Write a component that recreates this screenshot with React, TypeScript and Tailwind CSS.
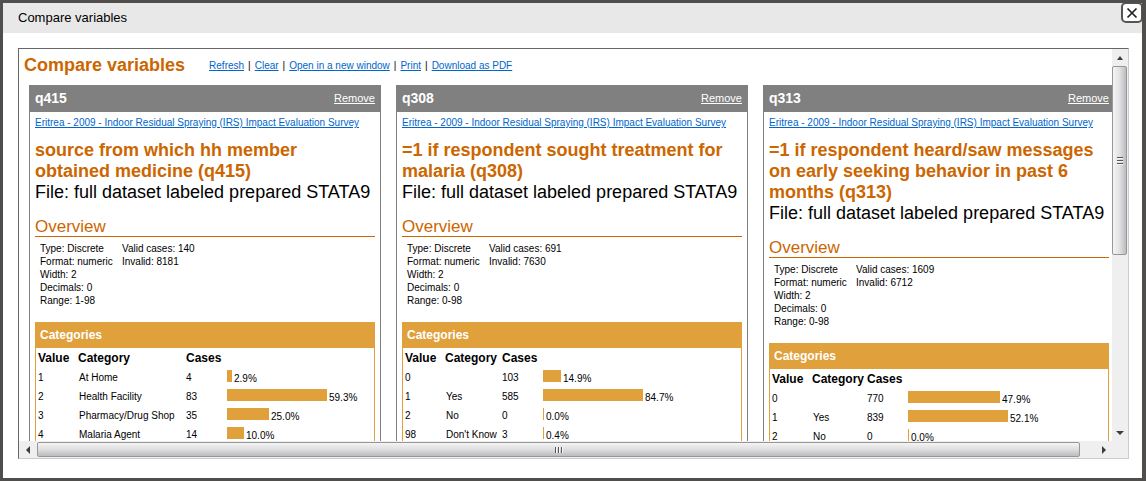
type Row = { value: string; category: string; cases: string; share: string; bar: number };

type Variable = {
  id: string;
  label: string;
  valid: string;
  invalid: string;
  range: string;
  categoryCol: string;
  rows: Row[];
};

const variables: Variable[] = [
  {
    id: "q415",
    label: "source from which hh member obtained medicine (q415)",
    valid: "140",
    invalid: "8181",
    range: "1-98",
    categoryCol: "w-[108px]",
    rows: [
      { value: "1", category: "At Home", cases: "4", share: "2.9%", bar: 5 },
      { value: "2", category: "Health Facility", cases: "83", share: "59.3%", bar: 100 },
      { value: "3", category: "Pharmacy/Drug Shop", cases: "35", share: "25.0%", bar: 42 },
      { value: "4", category: "Malaria Agent", cases: "14", share: "10.0%", bar: 17 },
    ],
  },
  {
    id: "q308",
    label: "=1 if respondent sought treatment for malaria (q308)",
    valid: "691",
    invalid: "7630",
    range: "0-98",
    categoryCol: "w-[57px]",
    rows: [
      { value: "0", category: "", cases: "103", share: "14.9%", bar: 18 },
      { value: "1", category: "Yes", cases: "585", share: "84.7%", bar: 100 },
      { value: "2", category: "No", cases: "0", share: "0.0%", bar: 1 },
      { value: "98", category: "Don't Know", cases: "3", share: "0.4%", bar: 1 },
    ],
  },
  {
    id: "q313",
    label: "=1 if respondent heard/saw messages on early seeking behavior in past 6 months (q313)",
    valid: "1609",
    invalid: "6712",
    range: "0-98",
    categoryCol: "w-[55px]",
    rows: [
      { value: "0", category: "", cases: "770", share: "47.9%", bar: 92 },
      { value: "1", category: "Yes", cases: "839", share: "52.1%", bar: 100 },
      { value: "2", category: "No", cases: "0", share: "0.0%", bar: 1 },
    ],
  },
];

const actions = ["Refresh", "Clear", "Open in a new window", "Print", "Download as PDF"];

function VariableCard({ variable }: { variable: Variable }) {
  return (
    <article className="flex w-[352px] shrink-0 flex-col border-x border-[#808080]">
      <header className="flex h-[27px] shrink-0 items-center justify-between bg-[#808080] px-[5px] text-white">
        <h2 className="text-[14px] leading-[27px] font-bold">{variable.id}</h2>
        <a href="#remove" className="text-[11px] leading-[27px] underline">Remove</a>
      </header>
      <div className="flex flex-1 flex-col px-[5px] pt-1">
        <a href="#survey" className="text-[10px] leading-[13px] whitespace-nowrap text-[#0066cc] underline">
          Eritrea - 2009 - Indoor Residual Spraying (IRS) Impact Evaluation Survey
        </a>
        <h3 className="mt-[11px] text-[18px] leading-[21px] font-bold text-[#cc6600]">{variable.label}</h3>
        <p className="text-[18px] leading-[21px] whitespace-nowrap">File: full dataset labeled prepared STATA9</p>
        <h4 className="mt-[14px] border-b border-[#cc6600] text-[17px] leading-[19px] text-[#cc6600]">Overview</h4>
        <div className="mt-[5px] flex pl-[5px] text-[10px] leading-[13px] whitespace-nowrap">
          <ul className="w-[82px]">
            <li>Type: Discrete</li>
            <li>Format: numeric</li>
            <li>Width: 2</li>
            <li>Decimals: 0</li>
            <li>Range: {variable.range}</li>
          </ul>
          <ul>
            <li>Valid cases: {variable.valid}</li>
            <li>Invalid: {variable.invalid}</li>
          </ul>
        </div>
        <section className="mt-[15px] flex-1 border-x border-[#e0a03c]">
          <h4 className="bg-[#e0a03c] pl-1 text-[12px] leading-[26px] font-bold text-white">Categories</h4>
          <table className="w-full table-fixed border-collapse text-left text-[10px] leading-[19px] whitespace-nowrap">
            <colgroup>
              <col className="w-[42px]" />
              <col className={variable.categoryCol} />
              <col className="w-[41px]" />
              <col />
            </colgroup>
            <thead>
              <tr className="h-5 text-[12px]">
                <th className="p-0 pl-0.5 font-bold">Value</th>
                <th className="p-0 font-bold">Category</th>
                <th className="p-0 font-bold">Cases</th>
                <th className="p-0" aria-label="Share" />
              </tr>
            </thead>
            <tbody>
              {variable.rows.map((row) => (
                <tr key={row.value} className="h-[19px]">
                  <td className="p-0 pl-0.5">{row.value}</td>
                  <td className="p-0 pl-px">{row.category}</td>
                  <td className="p-0">{row.cases}</td>
                  <td className="p-0">
                    <div className="flex h-[19px] items-start gap-0.5">
                      <span className="mt-0.5 h-3 bg-[#e0a03c]" style={{ width: row.bar }} />
                      <span className="leading-[21px]">{row.share}</span>
                    </div>
                  </td>
                </tr>
              ))}
            </tbody>
          </table>
        </section>
      </div>
    </article>
  );
}

function Arrow({ points, className }: { points: string; className: string }) {
  return (
    <span className={`flex shrink-0 items-center justify-center ${className}`}>
      <svg width="8" height="8" viewBox="0 0 8 8">
        <polygon points={points} fill="#3c3c3c" />
      </svg>
    </span>
  );
}

function VerticalBar() {
  return (
    <div aria-hidden="true" className="flex w-4 shrink-0 flex-col bg-[#efefef]">
      <Arrow points="1,6 4,2 7,6" className="h-[17px] w-full" />
      <div className="mr-px flex basis-[189px] items-center justify-center rounded-[2px] border border-[#979797] bg-linear-to-r from-[#f5f5f5] via-[#e2e2e4] to-[#bcbcc0]">
        <svg width="8" height="8" viewBox="0 0 8 8" shapeRendering="crispEdges">
          <path d="M1 0h6v1H1zM1 3h6v1H1zM1 6h6v1H1z" fill="#555" />
          <path d="M1 1h6v1H1zM1 4h6v1H1zM1 7h6v1H1z" fill="#f8f8f8" />
        </svg>
      </div>
      <Arrow points="0,2 8,2 4,6" className="mt-auto h-[17px] w-full" />
    </div>
  );
}

function HorizontalBar() {
  return (
    <div aria-hidden="true" className="flex h-[17px] shrink-0 bg-[#efefef]">
      <Arrow points="6,0 6,8 2,4" className="h-full w-[18px]" />
      <div className="my-px flex flex-1 items-center justify-center rounded-[2px] border border-[#979797] bg-linear-to-b from-[#f5f5f5] via-[#dedee0] to-[#bcbcc0]">
        <svg width="8" height="8" viewBox="0 0 8 8" shapeRendering="crispEdges">
          <path d="M0 1h1v6H0zM3 1h1v6H3zM6 1h1v6H6z" fill="#555" />
          <path d="M1 1h1v6H1zM4 1h1v6H4zM7 1h1v6H7z" fill="#f8f8f8" />
        </svg>
      </div>
      <Arrow points="2,0 2,8 6,4" className="h-full w-12" />
    </div>
  );
}

export default function App() {
  return (
    <div
      role="dialog"
      aria-label="Compare variables"
      className="relative flex h-screen flex-col overflow-hidden border-[3px] border-r-4 border-[#504e4d] bg-white font-['Liberation_Sans',Arial,sans-serif] text-black"
    >
      <div className="flex h-[30px] shrink-0 items-center bg-[#e8e8e8] pl-[15px] text-[13px]">Compare variables</div>
      <button
        type="button"
        aria-label="Close"
        className="absolute -top-px -right-px flex h-[21px] w-[22px] items-center justify-center rounded-[5px] border-2 border-[#555] bg-white"
      >
        <svg width="12" height="12" viewBox="0 0 12 12" stroke="#222" strokeWidth="1.7">
          <path d="M1.5 1.5l9 9M10.5 1.5l-9 9" />
        </svg>
      </button>

      <div className="mt-[15px] mr-[13px] mb-[19px] ml-[15px] flex min-h-0 flex-1 flex-col border border-[#ccc] border-t-[#666] border-l-[#666]">
        <div className="flex min-h-0 flex-1">
          <main className="flex min-w-0 flex-1 flex-col overflow-hidden">
            <div className="flex h-9 shrink-0 items-start gap-6 pl-[5px]">
              <h1 className="text-[18px] leading-[32px] font-bold text-[#cc6600]">Compare variables</h1>
              <nav className="flex items-center text-[10px] leading-[34px] whitespace-nowrap">
                {actions.map((action, i) => (
                  <span key={action}>
                    {i > 0 && <span className="px-1">|</span>}
                    <a href="#action" className="text-[#0066cc] underline">{action}</a>
                  </span>
                ))}
              </nav>
            </div>
            <div className="flex min-h-0 flex-1 gap-[15px] pl-[10px]">
              {variables.map((v) => (
                <VariableCard key={v.id} variable={v} />
              ))}
            </div>
          </main>
          <VerticalBar />
        </div>
        <HorizontalBar />
      </div>
    </div>
  );
}
